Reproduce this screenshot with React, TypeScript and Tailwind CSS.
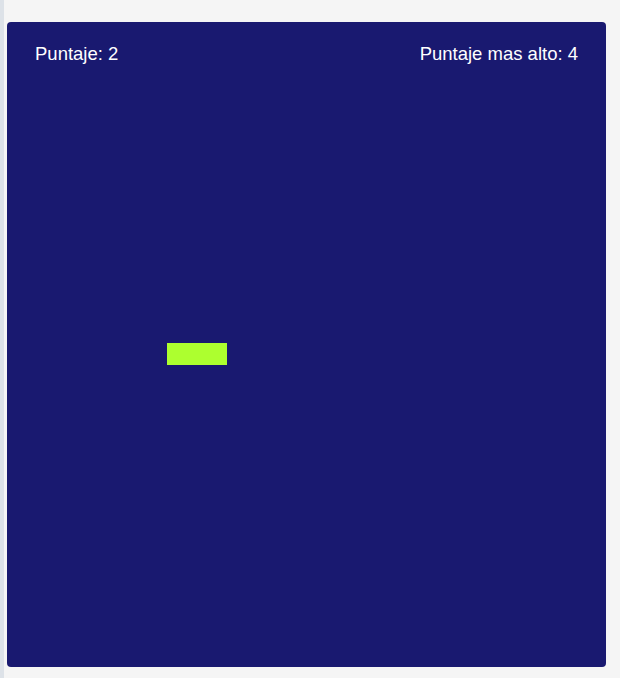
export default function App() {
  return (
    <div className="flex h-[678px] w-[620px] bg-[#f5f5f5] font-['Liberation_Sans',Arial,sans-serif]">
      <div className="w-[4px] shrink-0 bg-[#dde2e8]" />
      <div className="ml-[3px] mt-[22px] flex h-[645px] w-[599px] flex-col rounded-[4px] bg-[#191970] px-[28px] pt-[20px]">
        <div className="flex justify-between text-[18.5px] leading-[24px] text-white">
          <span>Puntaje: 2</span>
          <span>Puntaje mas alto: 4</span>
        </div>
        <div className="ml-[132px] mt-[277px] h-[22px] w-[60px] bg-[#adff2f]" />
      </div>
    </div>
  );
}
